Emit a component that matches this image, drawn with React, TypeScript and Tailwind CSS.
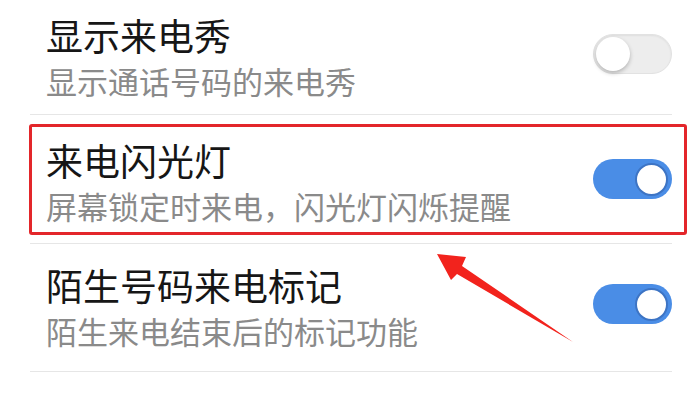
import React from "react";

type Item = {
  title: string;
  desc: string;
  on: boolean;
};

const items: Item[] = [
  { title: "显示来电秀", desc: "显示通话号码的来电秀", on: false },
  { title: "来电闪光灯", desc: "屏幕锁定时来电，闪光灯闪烁提醒", on: true },
  { title: "陌生号码来电标记", desc: "陌生来电结束后的标记功能", on: true },
];

function Toggle({ on }: { on: boolean }) {
  if (!on) {
    return (
      <div className="flex h-[40px] w-[79px] shrink-0 items-center rounded-full border border-[#e2e2e2] bg-[#ededed] px-[2px] shadow-[inset_0_1px_2px_rgba(0,0,0,0.06)]">
        <div className="h-[34px] w-[34px] rounded-full bg-white shadow-[0_2px_4px_rgba(0,0,0,0.25)]" />
      </div>
    );
  }
  return (
    <div className="flex h-[40px] w-[79px] shrink-0 items-center justify-end rounded-full bg-[#4a8de6] pr-[4px]">
      <div className="h-[33px] w-[33px] rounded-full border-[2px] border-[#3d74c4] bg-white" />
    </div>
  );
}

function Row({ item, className }: { item: Item; className: string }) {
  return (
    <div className={`flex items-center justify-between ${className}`}>
      <div className="flex flex-col">
        <div className="text-[37px] leading-[46px] text-[#161616]">{item.title}</div>
        <div className="text-[31px] leading-[46px] text-[#8a8a8a]">{item.desc}</div>
      </div>
      <div className="mb-[8px]">
        <Toggle on={item.on} />
      </div>
    </div>
  );
}

function Sep() {
  return <div className="ml-[1px] h-[1px] w-[642px] bg-[#e6e6e6]" />;
}

export default function App() {
  return (
    <div
      className="relative h-[400px] w-[698px] overflow-hidden bg-white"
      style={{ fontFamily: '"Noto Sans CJK SC", "Noto Sans", sans-serif' }}
    >
      <div className="flex flex-col pl-[29px] pr-[11px]">
        <Row item={items[0]} className="pl-[17px] pr-[15px] pt-[12px] pb-[10px]" />
        <Sep />
        <div className="h-[9px]" />
        <Row
          item={items[1]}
          className="rounded-[3px] border-[3px] border-[#e3262a] pl-[14px] pr-[12px] pt-[10px] pb-[3px]"
        />
        <div className="h-[8px]" />
        <Sep />
        <Row item={items[2]} className="pl-[17px] pr-[15px] pt-[18px] pb-[17px]" />
        <Sep />
      </div>

      {/* red pointer arrow */}
      <svg className="absolute left-0 top-0" width="698" height="400" viewBox="0 0 698 400">
        <polygon
          points="437,254 466,257 462,266 573,342 457,274 451,280"
          fill="#f2231d"
        />
      </svg>
    </div>
  );
}
